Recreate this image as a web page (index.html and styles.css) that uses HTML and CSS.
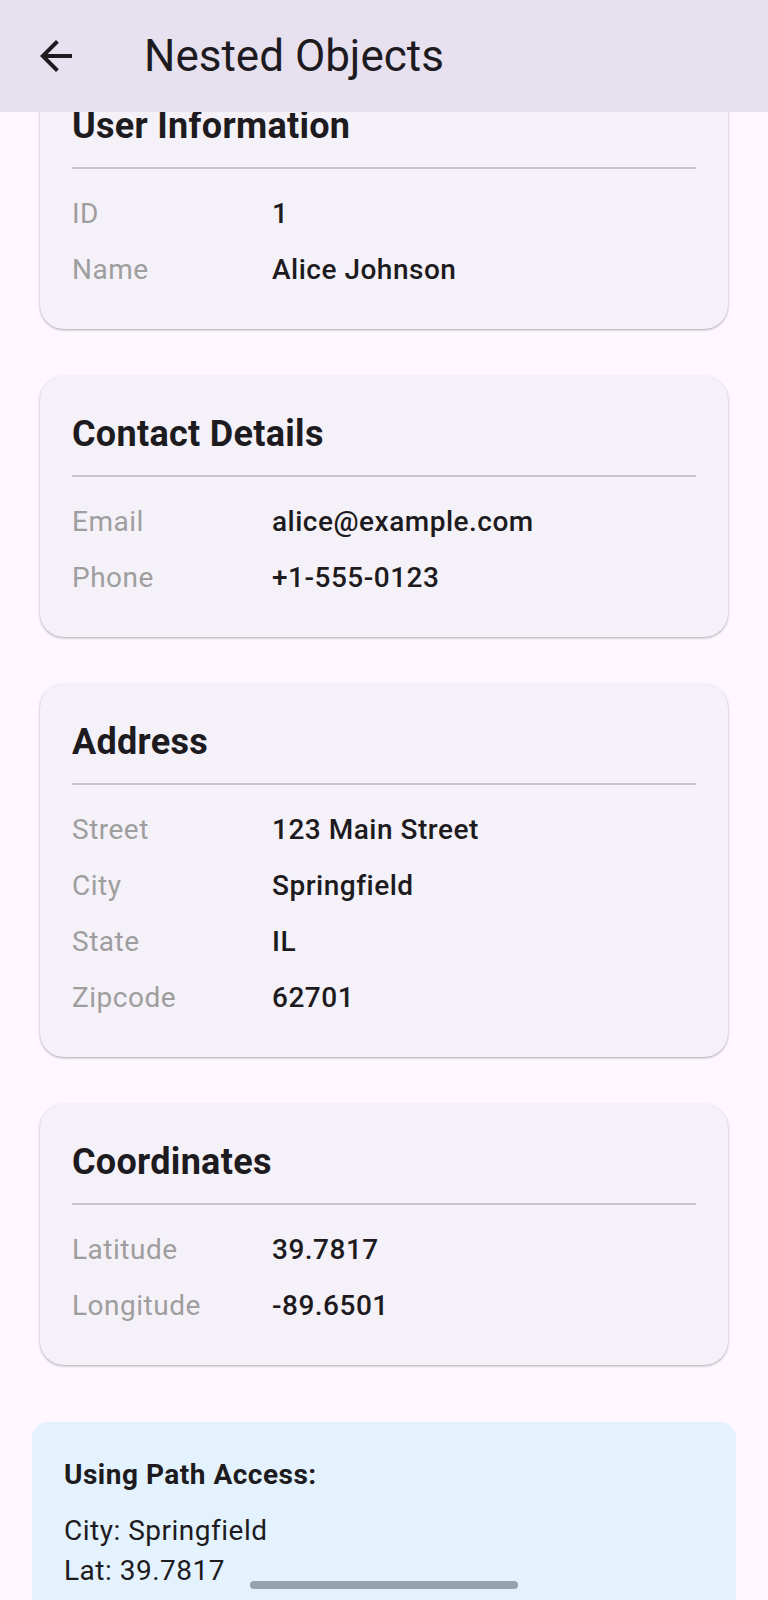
FILE: index.html
```html
<!DOCTYPE html>
<html lang="en">
<head>
  <meta charset="UTF-8">
  <meta name="viewport" content="width=device-width, initial-scale=1.0">
  <title>Nested Objects</title>
  <link rel="stylesheet" href="styles.css">
</head>
<body>
  <!-- App bar (scrolled-under state) -->
  <header class="app-bar">
    <button class="back-button" type="button" aria-label="Back">
      <svg viewBox="0 0 24 24" width="48" height="48">
        <path d="M20 11H7.83l5.59-5.59L12 4l-8 8 8 8 1.41-1.41L7.83 13H20v-2z" fill="#1d1b20"/>
      </svg>
    </button>
    <h1 class="app-title">Nested Objects</h1>
  </header>

  <main class="content">
    <!-- User Information -->
    <section class="card">
      <h2 class="card-title">User Information</h2>
      <hr class="divider">
      <div class="row"><span class="label">ID</span><span class="value">1</span></div>
      <div class="row"><span class="label">Name</span><span class="value">Alice Johnson</span></div>
    </section>

    <!-- Contact Details -->
    <section class="card">
      <h2 class="card-title">Contact Details</h2>
      <hr class="divider">
      <div class="row"><span class="label">Email</span><span class="value">alice@example.com</span></div>
      <div class="row"><span class="label">Phone</span><span class="value">+1-555-0123</span></div>
    </section>

    <!-- Address -->
    <section class="card">
      <h2 class="card-title">Address</h2>
      <hr class="divider">
      <div class="row"><span class="label">Street</span><span class="value">123 Main Street</span></div>
      <div class="row"><span class="label">City</span><span class="value">Springfield</span></div>
      <div class="row"><span class="label">State</span><span class="value">IL</span></div>
      <div class="row"><span class="label">Zipcode</span><span class="value">62701</span></div>
    </section>

    <!-- Coordinates -->
    <section class="card">
      <h2 class="card-title">Coordinates</h2>
      <hr class="divider">
      <div class="row"><span class="label">Latitude</span><span class="value">39.7817</span></div>
      <div class="row"><span class="label">Longitude</span><span class="value">-89.6501</span></div>
    </section>

    <!-- Path access summary -->
    <section class="path-box">
      <h3 class="path-title">Using Path Access:</h3>
      <p class="path-line">City: Springfield</p>
      <p class="path-line">Lat: 39.7817</p>
    </section>
  </main>

  <div class="gesture-bar"></div>
</body>
</html>
```

FILE: styles.css
```css
/* Global Styles */
html, body {
  height: 1600px;
  overflow: hidden;
}

body {
  margin: 0;
  font-family: 'Roboto', 'Noto Sans', sans-serif;
  background-color: #fef7ff;
  color: #1d1b20;
}

/* App bar */
.app-bar {
  position: fixed; /* sits over the scrolled content */
  top: 0;
  left: 0;
  right: 0;
  height: 112px;
  display: flex;
  align-items: center;
  background-color: #e7e0ee;
  z-index: 10;
}

.back-button {
  width: 96px;
  height: 96px;
  margin-left: 8px;
  padding: 0;
  border: none;
  background: none;
  display: flex;
  align-items: center;
  justify-content: center;
}

.app-title {
  margin: 0 0 0 40px;
  font-size: 44px;
  font-weight: 400;
  line-height: 56px;
  color: #1d1b20;
}

/* Scrolled content */
.content {
  display: flex;
  flex-direction: column;
  gap: 31px;
  padding: 60px 32px 0;
}

.card {
  margin: 8px;
  padding: 32px 32px 31px;
  background-color: #f5f1f8;
  border-radius: 24px;
  box-shadow: 0 1px 3px rgba(0, 0, 0, 0.22), 0 1px 2px rgba(0, 0, 0, 0.12);
}

.card-title {
  margin: 0;
  font-size: 36px;
  font-weight: 700;
  line-height: 52px;
  letter-spacing: 0.3px;
  color: #1d1b20;
}

.divider {
  margin: 15px 0 17px;
  border: none;
  border-top: 2px solid #cac4d0;
}

.row {
  display: flex;
  padding: 8px 0;
  font-size: 28px;
  line-height: 40px;
  letter-spacing: 0.5px;
}

.label {
  width: 200px;
  flex-shrink: 0;
  color: #9e9e9e;
}

.value {
  font-weight: 500;
  color: #1d1b20;
}

/* Path access box */
.path-box {
  margin-top: 18px;
  padding: 33px 32px 32px;
  background-color: #e3f2fd;
  border-radius: 16px;
}

.path-title {
  margin: 0 0 16px;
  font-size: 28px;
  font-weight: 700;
  line-height: 40px;
  letter-spacing: 0.5px;
}

.path-line {
  margin: 0;
  font-size: 28px;
  line-height: 40px;
  letter-spacing: 0.5px;
}

/* Android gesture handle */
.gesture-bar {
  position: fixed;
  left: 250px;
  top: 1581px;
  width: 268px;
  height: 8px;
  border-radius: 4px;
  background-color: #98a2ae;
  z-index: 20;
}
```
